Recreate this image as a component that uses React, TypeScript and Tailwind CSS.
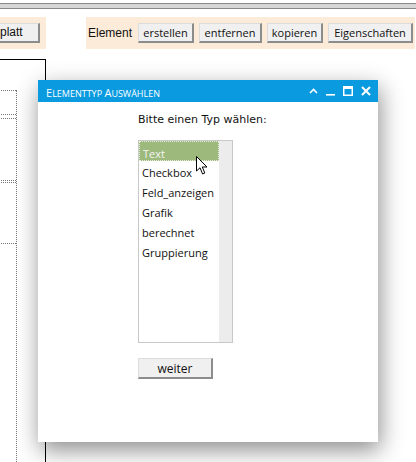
import React from "react";

const btn =
  "h-[20px] bg-[#f0f0f0] border-t border-l border-[#dcdcdc] border-r-2 border-b-2 border-r-[#8c8c8c] border-b-[#8c8c8c] text-[11px] leading-[17px] text-[#111] font-['Open_Sans',sans-serif] px-[5px] flex items-center justify-center";

export default function App() {
  const items = ["Text", "Checkbox", "Feld_anzeigen", "Grafik", "berechnet", "Gruppierung"];
  return (
    <div className="relative w-[416px] h-[462px] bg-white overflow-hidden font-['Open_Sans',sans-serif]">
      {/* top gray band */}
      <div className="h-[3px]" />
      <div className="h-[6px] bg-[#d6d6d6] border-t border-b border-[#8a8a8a]" />
      {/* toolbar */}
      <div className="mt-[8px] flex h-[32px]">
        <div className="w-[46px] h-full bg-[#fbebd8] flex items-center pr-[6px]">
          <div className="h-[20px] w-[40px] bg-[#f0f0f0] border-t border-[#dcdcdc] border-r-2 border-b-2 border-r-[#8c8c8c] border-b-[#8c8c8c] flex items-center text-[12px] leading-[17px] text-[#111] font-['Liberation_Sans',sans-serif]">
            platt
          </div>
        </div>
        <div className="ml-[40px] w-[329px] h-full bg-[#fbebd8] flex items-center pl-[2px] gap-[5px]">
          <span className="text-[12px] text-[#111] font-['Liberation_Sans',sans-serif] mr-[1px]">Element</span>
          <div className={btn + " w-[56px]"}>erstellen</div>
          <div className={btn + " w-[63px]"}>entfernen</div>
          <div className={btn + " w-[56px]"}>kopieren</div>
          <div className={btn + " w-[85px]"}>Eigenschaften</div>
        </div>
      </div>
      {/* canvas */}
      <div className="mt-[10px] ml-[-1px] w-[47px] h-[420px] border-t border-r border-black">
        <div className="mt-[30px] w-[18px] h-[400px] border-r border-dotted border-[#777]">
          <div className="h-[25px] border-t border-b border-dotted border-[#777]" />
          <div className="mt-[3px] h-[63px] border-t border-b border-dotted border-[#777]" />
          <div className="mt-[1px] h-[62px] border-t border-b border-dotted border-[#777]" />
        </div>
      </div>

      {/* dialog */}
      <div className="absolute left-[38px] top-[80px] w-[340px] h-[362px] bg-white shadow-[2px_8px_22px_rgba(0,0,0,0.45)] flex flex-col">
        <div className="h-[22px] bg-[#0a9ae0] flex items-center pl-[8px] pr-[7px]">
          <span className="text-white leading-none whitespace-nowrap">
            <span className="text-[11px]">E</span>
            <span className="text-[9px]">LEMENTTYP </span>
            <span className="text-[11px]">A</span>
            <span className="text-[9px]">USWÄHLEN</span>
          </span>
          <div className="ml-auto flex items-center gap-[8px]">
            <svg width="9" height="10" viewBox="0 0 9 10">
              <path d="M1 7 L4.5 3.5 L8 7" stroke="white" strokeWidth="1.6" fill="none" />
            </svg>
            <svg width="9" height="10" viewBox="0 0 9 10">
              <rect x="0" y="8" width="9" height="1.6" fill="white" />
            </svg>
            <svg width="10" height="10" viewBox="0 0 10 10">
              <rect x="0.75" y="0.75" width="8.5" height="8.5" stroke="white" strokeWidth="1.5" fill="none" />
              <rect x="0.5" y="0.5" width="9" height="2.5" fill="white" />
            </svg>
            <svg width="10" height="10" viewBox="0 0 10 10">
              <path d="M1 1 L9 9 M9 1 L1 9" stroke="white" strokeWidth="2" />
            </svg>
          </div>
        </div>
        <div className="pl-[100px] flex flex-col">
          <div className="mt-[11px] text-[11px] leading-[13px] text-[#111] font-['DejaVu_Sans',sans-serif]">
            Bitte einen Typ wählen:
          </div>
          <div className="mt-[14px] w-[95px] h-[203px] border border-[#c8c8c8] flex">
            <div className="flex-1 flex flex-col">
              {items.map((t, i) => (
                <div
                  key={t}
                  className={
                    "h-[20px] text-[11px] leading-[20px] pl-[3px] " +
                    (i === 0
                      ? "bg-[#9dba7c] text-[#f4f4f4] border border-dotted border-[#e8f0e0] pl-[2px] leading-[18px] h-[18px] mb-[2px] pt-[2px]"
                      : "text-[#111]")
                  }
                >
                  {t}
                </div>
              ))}
            </div>
            <div className="w-[13px] h-full bg-[#ececec]" />
          </div>
          <div className={btn + " mt-[15px] w-[75px] h-[21px] text-[12px]"}>weiter</div>
        </div>
      </div>

      {/* cursor */}
      <svg className="absolute left-[196px] top-[156px]" width="14" height="20" viewBox="0 0 14 20">
        <path d="M0.5 0.5 L0.5 15 L4 11.8 L6.6 18 L8.8 17 L6.3 11 L11 11 Z" fill="white" stroke="black" strokeWidth="1" strokeLinejoin="round" />
      </svg>
    </div>
  );
}
